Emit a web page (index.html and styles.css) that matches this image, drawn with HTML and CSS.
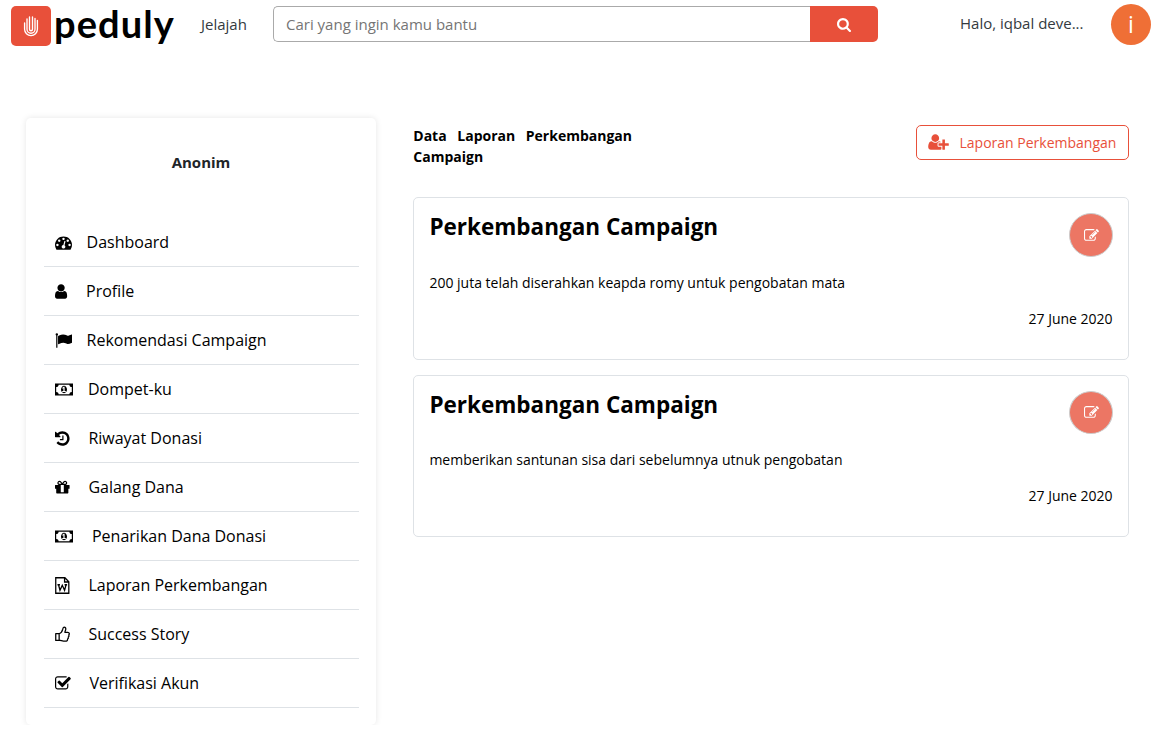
FILE: index.html
```html
<!DOCTYPE html>
<html lang="id">
<head>
<meta charset="utf-8">
<title>Peduly</title>
<link rel="stylesheet" href="styles.css">
</head>
<body>
<svg class="sprite" aria-hidden="true">
  <symbol id="money" viewBox="0 0 1920 1792"><path fill-rule="evenodd" d="M0 256h1920v1280H0zM384 384q0 106-75 181t-181 75v512q106 0 181 75t75 181h1152q0-106 75-181t181-75V640q-106 0-181-75t-75-181zM960 500q140 0 230 120t90 276-90 276-230 120-230-120-90-276 90-276 230-120zM768 1152h384v-96h-128V608H910L762 745l77 80q42-37 55-57h2v288H768z"/></symbol>
  <symbol id="edit" viewBox="0 0 1792 1792"><path d="M888 1184l116-116-152-152-116 116v56h96v96h56zm440-720q-16-16-33 1l-350 350q-17 17-1 33t33-1l350-350q17-17 1-33zm80 594v190q0 119-84.500 203.500t-203.500 84.500h-832q-119 0-203.500-84.500t-84.500-203.500v-832q0-119 84.500-203.500t203.500-84.500h832q63 0 117 25 15 7 18 23 3 17-9 29l-49 49q-14 14-32 8-23-6-45-6h-832q-66 0-113 47t-47 113v832q0 66 47 113t113 47h832q66 0 113-47t47-113v-126q0-13 9-22l64-64q15-15 35-7t20 29zm-96-738l288 288-672 672h-288v-288zm444 132l-92 92-288-288 92-92q28-28 68-28t68 28l152 152q28 28 28 68t-28 68z"/></symbol>
</svg>
<header class="navbar">
  <a class="brand">
    <span class="brand-mark"><svg width="40" height="40" viewBox="0 0 40 40" fill="none" stroke="#fff" stroke-width="1.350" stroke-linecap="round"><path d="M13.600 17v6.200a6.400 6.400 0 0 0 12.800 0V14.500M16 12.800v10.400a4 4 0 0 0 8 0V12.500M18.500 11v12.200a1.500 1.500 0 0 0 3 0V11"/></svg></span>
    <span class="brand-name">peduly</span>
  </a>
  <a class="nav-link">Jelajah</a>
  <div class="search">
    <div class="search-input">Cari yang ingin kamu bantu</div>
    <div class="search-button"><svg width="14" height="14" viewBox="64 128 1664 1664" fill="#fff"><path d="M1216 832q0-185-131.500-316.500t-316.500-131.500-316.500 131.500-131.500 316.500 131.500 316.500 316.500 131.500 316.500-131.500 131.500-316.500zm512 832q0 52-38 90t-90 38q-54 0-90-38l-343-342q-179 124-399 124-143 0-273.500-55.500t-225-150-150-225-55.500-273.500 55.500-273.500 150-225 225-150 273.500-55.500 273.500 55.500 225 150 150 225 55.500 273.500q0 220-124 399l343 343q37 37 37 90z"/></svg></div>
  </div>
  <span class="greeting">Halo, iqbal deve...</span>
  <span class="avatar">i</span>
</header>
<main class="layout">
  <aside class="sidebar">
    <div class="sidebar-name">Anonim</div>
    <nav class="menu">
      <a class="item item-dashboard"><svg class="icon" viewBox="0 0 1792 1792"><path d="M384 1152q0-53-37.500-90.500t-90.500-37.500-90.500 37.500-37.500 90.500 37.500 90.500 90.500 37.500 90.500-37.500 37.500-90.500zm192-448q0-53-37.500-90.500t-90.500-37.500-90.500 37.500-37.500 90.500 37.500 90.500 90.500 37.500 90.500-37.500 37.500-90.500zm428 481l101-382q6-26-7.500-48.500t-38.500-29.500-48 6.500-30 39.500l-101 382q-60 5-107 43.500t-63 98.500q-20 77 20 146t117 89 146-20 89-117q16-60-6-117t-72-91zm660-33q0-53-37.500-90.500t-90.500-37.500-90.500 37.500-37.500 90.500 37.500 90.500 90.500 37.500 90.500-37.500 37.500-90.500zm-640-640q0-53-37.500-90.500t-90.500-37.500-90.500 37.500-37.500 90.500 37.500 90.500 90.500 37.500 90.500-37.500 37.500-90.500zm448 192q0-53-37.500-90.500t-90.500-37.500-90.500 37.500-37.500 90.500 37.500 90.500 90.500 37.500 90.500-37.500 37.500-90.500zm320 448q0 261-141 483-19 29-54 29h-1402q-35 0-54-29-141-221-141-483 0-182 71-348t191-286 286-191 348-71 348 71 286 191 191 286 71 348z"/></svg><span>Dashboard</span></a>
      <a class="item item-profile"><svg class="icon" viewBox="256 0 1792 1792"><path d="M1536 1399q0 109-62.500 187t-150.500 78h-854q-88 0-150.500-78t-62.500-187q0-85 8.500-160.500t31.500-152 58.500-131 94-89 134.500-34.500q131 128 313 128t313-128q76 0 134.500 34.500t94 89 58.500 131 31.500 152 8.500 160.500zm-256-887q0 159-112.500 271.500t-271.500 112.500-271.500-112.500-112.500-271.500 112.500-271.500 271.500-112.500 271.500 112.500 112.500 271.500z"/></svg><span>Profile</span></a>
      <a class="item item-dashboard"><svg class="icon" viewBox="0 0 1792 1792"><path d="M320 256q0 72-64 110v1266q0 13-9.500 22.500t-22.500 9.500h-64q-13 0-22.500-9.500t-9.500-22.500v-1266q-64-38-64-110 0-53 37.500-90.500t90.500-37.500 90.500 37.500 37.500 90.500zm1472 64v763q0 25-12.500 38.500t-39.500 27.500q-215 116-369 116-61 0-123.500-22t-108.500-48-115.500-48-142.500-22q-192 0-464 146-17 9-33 9-26 0-45-19t-19-45v-742q0-32 31-55 21-14 79-43 236-120 421-120 107 0 200 29t219 88q38 19 88 19 54 0 117.500-21t110-47 88-47 54.500-21q26 0 45 19t19 45z"/></svg><span>Rekomendasi Campaign</span></a>
      <a class="item item-wallet"><svg class="icon icon-wide"><use href="#money"/></svg><span>Dompet-ku</span></a>
      <a class="item item-far"><svg class="icon" viewBox="128 0 1792 1792"><path d="M1664 896q0 156-61 298t-164 245-245 164-298 61q-172 0-327-72.500t-264-204.500q-7-10-6.500-22.500t8.500-20.500l137-138q10-9 25-9 16 2 23 12 73 95 179 147t225 52q104 0 198.500-40.500t163.500-109.500 109.500-163.500 40.500-198.500-40.500-198.500-109.500-163.500-163.500-109.500-198.500-40.500q-98 0-188 35.500t-160 101.500l137 138q31 30 14 69-17 40-59 40h-448q-26 0-45-19t-19-45v-448q0-42 40-59 39-17 69 14l130 129q107-101 244.500-156.500t284.500-55.500q156 0 298 61t245 164 164 245 61 298zm-640-288v448q0 14-9 23t-23 9h-320q-14 0-23-9t-9-23v-64q0-14 9-23t23-9h224v-352q0-14 9-23t23-9h64q14 0 23 9t9 23z"/></svg><span>Riwayat Donasi</span></a>
      <a class="item item-far"><svg class="icon" viewBox="128 0 1792 1792"><path d="M1056 1356v-716h-320v716q0 25 18 38.500t46 13.500h192q28 0 46-13.500t18-38.500zm-456-844h195l-126-161q-26-31-69-31-40 0-68 28t-28 68 28 68 68 28zm688-96q0-40-28-68t-68-28q-43 0-69 31l-125 161h194q40 0 68-28t28-68zm376 256v320q0 14-9 23t-23 9h-96v416q0 40-28 68t-68 28h-1088q-40 0-68-28t-28-68v-416h-96q-14 0-23-9t-9-23v-320q0-14 9-23t23-9h440q-93 0-158.500-65.500t-65.500-158.500 65.500-158.500 158.500-65.500q107 0 168 77l128 165 128-165q61-77 168-77 93 0 158.500 65.500t65.500 158.500-65.500 158.500-158.500 65.500h440q14 0 23 9t9 23z"/></svg><span>Galang Dana</span></a>
      <a class="item item-withdraw"><svg class="icon icon-wide"><use href="#money"/></svg><span>Penarikan Dana Donasi</span></a>
      <a class="item item-far"><svg class="icon" viewBox="0 0 16 16" fill="none" stroke="#000" stroke-width="1.200"><path d="M.7.700h8.600L13 4.400v10.900H.7zM9 .7v4h4"/><path d="M2.300 7.300h2.400M9 7.300h2.400M3.300 7.300l1.400 5.200L6.850 7.800 9 12.500l1.400-5.200"/></svg><span>Laporan Perkembangan</span></a>
      <a class="item item-far"><svg class="icon" viewBox="0 0 16 16" fill="none" stroke="#000" stroke-width="1.200" stroke-linejoin="round"><path d="M.7 7.200h3.200v6.400H.7zM3.900 7.300C6 6.500 7 4.500 7.300 3c.2-1.300.5-2 1.200-2 1.500 0 1.800 1.200 1.600 2.300-.1.900-.7 1.700-.8 2.700H12c1.700.1 1.900 1.600.9 2.400.5.800.3 1.700-.4 2.100.3.900-.1 1.500-.7 1.800.2 1.400-.7 2-2 2-2.600 0-4-.8-5.900-1"/></svg><span>Success Story</span></a>
      <a class="item item-last"><svg class="icon" viewBox="64 0 1792 1792"><path d="M1472 930v318q0 119-84.500 203.500t-203.500 84.500h-832q-119 0-203.500-84.500t-84.500-203.500v-832q0-119 84.500-203.500t203.500-84.500h832q63 0 117 25 15 7 18 23 3 17-9 29l-49 49q-10 10-23 10-3 0-9-2-23-6-45-6h-832q-66 0-113 47t-47 113v832q0 66 47 113t113 47h832q66 0 113-47t47-113v-254q0-13 9-22l64-64q10-10 23-10 6 0 12 3 20 8 20 29zm231-489l-814 814q-24 24-57 24t-57-24l-430-430q-24-24-24-57t24-57l110-110q24-24 57-24t57 24l263 263 647-647q24-24 57-24t57 24l110 110q24 24 24 57t-24 57z"/></svg><span>Verifikasi Akun</span></a>
    </nav>
  </aside>
  <section class="content">
    <div class="toolbar">
      <h1 class="title">Data Laporan Perkembangan Campaign</h1>
      <a class="add-button"><svg width="21" height="18" viewBox="0 0 2048 1792" fill="#e8503a"><path d="M704 896q-159 0-271.500-112.500t-112.500-271.500 112.500-271.500 271.500-112.500 271.500 112.500 112.500 271.500-112.500 271.500-271.500 112.500zm960 128h352q13 0 22.500 9.500t9.500 22.500v192q0 13-9.500 22.500t-22.500 9.500h-352v352q0 13-9.500 22.500t-22.500 9.500h-192q-13 0-22.500-9.500t-9.500-22.500v-352h-352q-13 0-22.500-9.500t-9.500-22.500v-192q0-13 9.500-22.500t22.500-9.500h352v-352q0-13 9.500-22.500t22.500-9.500h192q13 0 22.500 9.500t9.500 22.500v352zm-736 224q0 52 38 90t90 38h256v238q-68 50-171 50h-874q-121 0-194-69t-73-190q0-53 3.500-103.500t14-109 26.500-108.500 43-97.500 62-81 85.500-53.500 111.500-20q19 0 39 17 79 61 154.500 91.500t164.500 30.500 164.500-30.500 154.500-91.500q20-17 39-17 132 0 217 96h-223q-52 0-90 38t-38 90v192z"/></svg><span>Laporan Perkembangan</span></a>
    </div>
    <article class="card">
      <div class="card-head"><h2 class="card-title">Perkembangan Campaign</h2><a class="edit"><svg width="15" height="15" fill="#fff"><use href="#edit"/></svg></a></div>
      <p class="card-text">200 juta telah diserahkan keapda romy untuk pengobatan mata</p>
      <p class="card-date">27 June 2020</p>
    </article>
    <article class="card card-second">
      <div class="card-head"><h2 class="card-title">Perkembangan Campaign</h2><a class="edit"><svg width="15" height="15" fill="#fff"><use href="#edit"/></svg></a></div>
      <p class="card-text">memberikan santunan sisa dari sebelumnya utnuk pengobatan</p>
      <p class="card-date">27 June 2020</p>
    </article>
  </section>
</main>
</body>
</html>
```
FILE: styles.css
```css
* { box-sizing: border-box; }
body { margin: 0; background: #fff; color: #000; font: 14px/21px "Open Sans", sans-serif; }
.sprite { display: none; }
.navbar { display: flex; height: 50px; padding: 4px 13px 0 11px; align-items: flex-start; color: #343a40; font-size: 15px; }
.brand { display: flex; width: 190px; }
.brand-mark { width: 40px; height: 40px; margin-top: 2px; background: #e8503a; border-radius: 5px; }
.brand-mark svg { display: block; }
.brand-name { margin-left: 3px; color: #000; font: 700 38px/38px Lato, sans-serif; letter-spacing: 1.1px; }
.nav-link { width: 72px; margin-top: 10px; }
.search { display: flex; width: 605px; height: 36px; margin-top: 2px; }
.search-input { flex: 1; padding-left: 12px; border: 1px solid #aaa; border-right: 0; border-radius: 5px 0 0 5px; color: #757575; line-height: 35px; }
.search-button { display: flex; width: 68px; padding: 1px 1px 0 0; align-items: center; justify-content: center; background: #e8503a; border-radius: 0 5px 5px 0; }
.greeting { margin: 9px 0 0 82px; }
.avatar { width: 40px; height: 41px; margin-left: auto; border-radius: 50%; background: #ef6f36; color: #fff; font-size: 23px; line-height: 41px; text-align: center; }
.layout { display: flex; padding: 68px 35px 0 26px; gap: 37px; align-items: flex-start; }
.sidebar { width: 350px; height: 607px; padding: 34px 17px 0 18px; border-radius: 5px; box-shadow: 0 0 6px rgba(0, 0, 0, .1); }
.sidebar-name { height: 66px; padding-right: 1px; color: #212529; font-size: 15px; font-weight: 700; text-align: center; }
.item { display: flex; height: 49px; padding: 0 0 0 11.4px; align-items: center; gap: 16px; border-bottom: 1px solid #dee2e6; font-size: 16px; line-height: 24px; }
.icon { width: 17px; height: 17px; flex: none; }
.icon-wide { width: 18px; }
.item-dashboard { gap: 14.2px; }
.item-profile { gap: 13.7px; }
.item-wallet { gap: 14.6px; }
.item-far { gap: 16px; }
.item-withdraw { gap: 18.6px; }
.item-last { gap: 17px; }
.content { flex: 1; padding-top: 7px; }
.toolbar { display: flex; height: 72px; justify-content: space-between; align-items: flex-start; }
.title { width: 219px; margin: 0; padding-left: .3px; font-size: 14px; line-height: 21px; text-align: justify; }
.add-button { display: flex; width: 213px; height: 35px; padding-left: 11px; align-items: center; gap: 10.5px; border: 1px solid #e8503a; border-radius: 5px; color: #e8503a; }
.add-button svg { margin-bottom: 2px; }
.card { height: 163px; padding: 15px; border: 1px solid #dee2e6; border-radius: 5px; }
.card-second { height: 162px; margin-top: 15px; }
.card-head { display: flex; height: 59px; justify-content: space-between; }
.card-second .card-head { height: 58px; }
.card-title { margin: 0; padding-left: .4px; font-size: 22.5px; font-weight: 700; line-height: 27px; }
.edit { display: flex; width: 44px; height: 44px; align-items: center; justify-content: center; border: 1px solid #ccc; border-radius: 50%; background: #ec7664; }
.card-second .edit { height: 43px; }
.card-text { margin: 0 0 15px; padding-left: .4px; }
.card-date { margin: 0; padding-right: .4px; text-align: right; }
```
